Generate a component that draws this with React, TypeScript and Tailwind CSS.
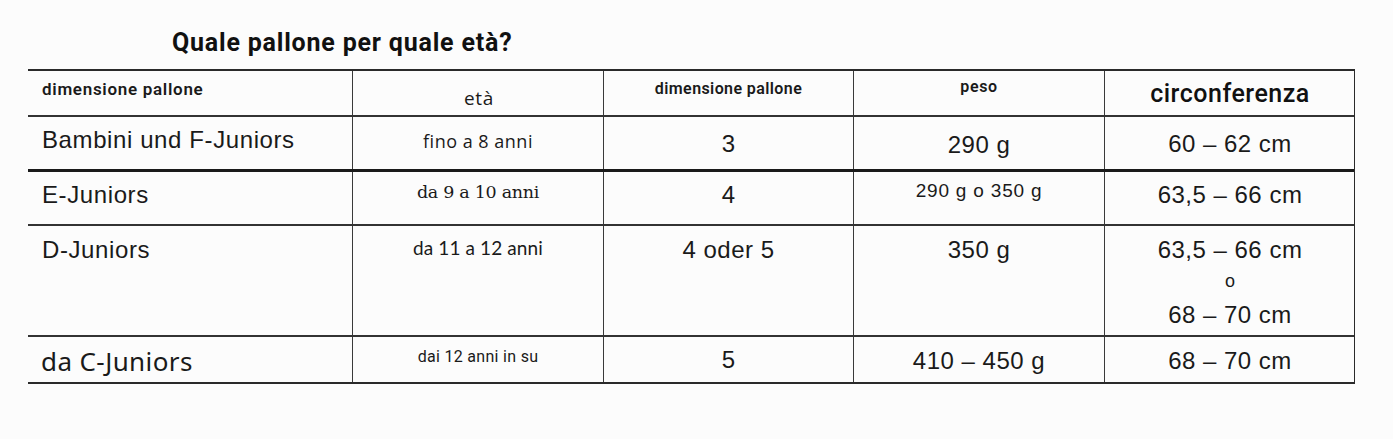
import React from "react";

const arial = "font-['Liberation_Sans',Arial,sans-serif]";

function Cell({
  children,
  className = "",
  last = false,
}: {
  children: React.ReactNode;
  className?: string;
  last?: boolean;
}) {
  return (
    <div
      className={`flex flex-col ${last ? "" : "border-r-[1.5px] border-[#3a3a3a]"} ${className}`}
    >
      {children}
    </div>
  );
}

export default function App() {
  const grid = "grid grid-cols-[325px_251px_250px_251px_250px]";
  return (
    <div className="w-[1393px] h-[439px] bg-[#fcfcfc] text-[#1a1a1a] overflow-hidden">
      <div className="pl-[172px] pt-[27px] h-[69px]">
        <h1 className="font-['Roboto',sans-serif] font-bold text-[25px] leading-[32px] tracking-[0.8px] text-[#111]">
          Quale pallone per quale età?
        </h1>
      </div>
      <div className="ml-[28px] w-[1327px] border-t-2 border-b-[2.5px] border-r-[1.5px] border-[#2a2a2a]">
        {/* header */}
        <div className={`${grid} h-[46px] border-b-2 border-[#333]`}>
          <Cell className="pl-[14px] pt-[8px]">
            <span className="font-['Roboto',sans-serif] font-semibold text-[17px] leading-[20px] tracking-[0.7px]">
              dimensione pallone
            </span>
          </Cell>
          <Cell className="items-center pt-[15px]">
            <span className="font-['Open_Sans',sans-serif] text-[19px] leading-[24px] tracking-[0.6px] pl-[2px]">
              età
            </span>
          </Cell>
          <Cell className="items-center pt-[8px]">
            <span className="font-['Roboto',sans-serif] font-semibold text-[16px] leading-[20px] tracking-[0.4px]">
              dimensione pallone
            </span>
          </Cell>
          <Cell className="items-center pt-[6px]">
            <span className="font-['Roboto',sans-serif] font-semibold text-[16px] leading-[20px] tracking-[0.6px]">
              peso
            </span>
          </Cell>
          <Cell last className="items-center pt-[9px]">
            <span className="font-['Roboto',sans-serif] font-medium text-[25px] leading-[28px] tracking-[0.5px] text-[#111]">
              circonferenza
            </span>
          </Cell>
        </div>
        {/* row 1 */}
        <div className={`${grid} h-[55px] border-b-[3px] border-[#1a1a1a]`}>
          <Cell className="pl-[14px] pt-[9px]">
            <span className={`${arial} text-[24px] leading-[28px] tracking-[0.6px]`}>
              Bambini und F-Juniors
            </span>
          </Cell>
          <Cell className="items-center pt-[12px]">
            <span className="font-['Open_Sans',sans-serif] text-[18px] leading-[24px] tracking-[0.5px]">
              fino a 8 anni
            </span>
          </Cell>
          <Cell className="items-center pt-[13px]">
            <span className={`${arial} text-[24px] leading-[28px]`}>3</span>
          </Cell>
          <Cell className="items-center pt-[14px]">
            <span className={`${arial} text-[24px] leading-[28px] tracking-[0.5px]`}>290 g</span>
          </Cell>
          <Cell last className="items-center pt-[13px]">
            <span className={`${arial} text-[24px] leading-[28px] tracking-[0.5px]`}>60 – 62 cm</span>
          </Cell>
        </div>
        {/* row 2 */}
        <div className={`${grid} h-[54px] border-b-2 border-[#333]`}>
          <Cell className="pl-[14px] pt-[9px]">
            <span className={`${arial} text-[24px] leading-[28px] tracking-[0.6px]`}>E-Juniors</span>
          </Cell>
          <Cell className="items-center pt-[8px]">
            <span className="font-['DejaVu_Serif',serif] text-[17.5px] leading-[24px] tracking-[-0.3px]">
              da 9 a 10 anni
            </span>
          </Cell>
          <Cell className="items-center pt-[9px]">
            <span className={`${arial} text-[24px] leading-[28px]`}>4</span>
          </Cell>
          <Cell className="items-center pt-[7px]">
            <span className={`${arial} text-[19px] leading-[24px] tracking-[0.8px]`}>290 g o 350 g</span>
          </Cell>
          <Cell last className="items-center pt-[9px]">
            <span className={`${arial} text-[24px] leading-[28px] tracking-[0.5px]`}>63,5 – 66 cm</span>
          </Cell>
        </div>
        {/* row 3 */}
        <div className={`${grid} h-[111px] border-b-2 border-[#333]`}>
          <Cell className="pl-[14px] pt-[10px]">
            <span className={`${arial} text-[24px] leading-[28px] tracking-[0.6px]`}>D-Juniors</span>
          </Cell>
          <Cell className="items-center pt-[10px]">
            <span className="font-['Lato',sans-serif] text-[19px] leading-[24px] tracking-[0.1px]">
              da 11 a 12 anni
            </span>
          </Cell>
          <Cell className="items-center pt-[10px]">
            <span className={`${arial} text-[24px] leading-[28px] tracking-[0.5px]`}>4 oder 5</span>
          </Cell>
          <Cell className="items-center pt-[10px]">
            <span className={`${arial} text-[24px] leading-[28px] tracking-[0.5px]`}>350 g</span>
          </Cell>
          <Cell last className="items-center pt-[10px]">
            <span className={`${arial} text-[24px] leading-[28px] tracking-[0.5px]`}>63,5 – 66 cm</span>
            <span className={`${arial} text-[18px] leading-[20px] mt-[7px]`}>o</span>
            <span className={`${arial} text-[24px] leading-[28px] tracking-[0.5px] mt-[10px]`}>68 – 70 cm</span>
          </Cell>
        </div>
        {/* row 4 */}
        <div className={`${grid} h-[45px]`}>
          <Cell className="pl-[13px] pt-[8px]">
            <span className="font-['Noto_Sans',sans-serif] text-[26px] leading-[32px] tracking-[0.4px]">
              da C-Juniors
            </span>
          </Cell>
          <Cell className="items-center pt-[9px]">
            <span className="font-['Roboto',sans-serif] text-[16px] leading-[22px] tracking-[0.3px]">
              dai 12 anni in su
            </span>
          </Cell>
          <Cell className="items-center pt-[9px]">
            <span className={`${arial} text-[24px] leading-[28px]`}>5</span>
          </Cell>
          <Cell className="items-center pt-[10px]">
            <span className={`${arial} text-[24px] leading-[28px] tracking-[0.5px]`}>410 – 450 g</span>
          </Cell>
          <Cell last className="items-center pt-[10px]">
            <span className={`${arial} text-[24px] leading-[28px] tracking-[0.5px]`}>68 – 70 cm</span>
          </Cell>
        </div>
      </div>
    </div>
  );
}
